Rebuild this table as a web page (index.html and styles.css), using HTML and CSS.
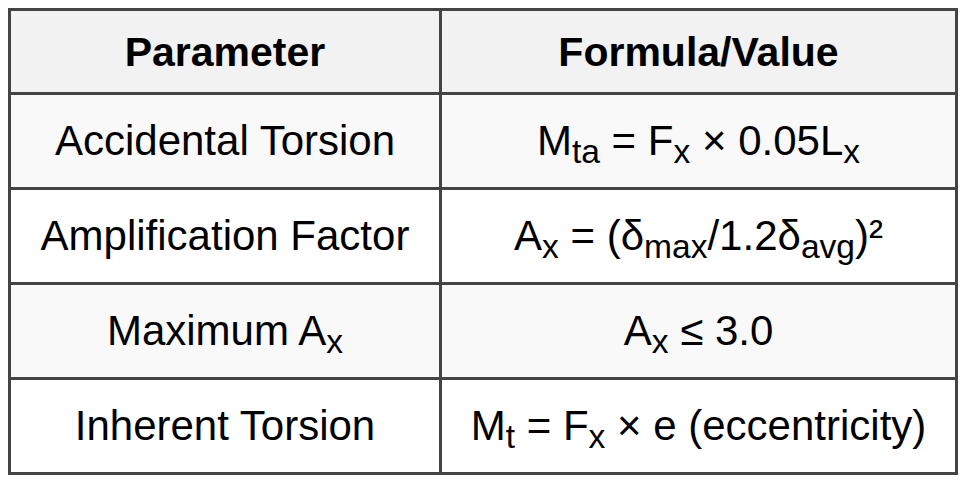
FILE: index.html
```html
<!DOCTYPE html>
<html>
<head>
<meta charset="utf-8">
<link rel="stylesheet" href="styles.css">
</head>
<body>
<table class="params">
  <colgroup>
    <col class="col-name">
    <col class="col-value">
  </colgroup>
  <tr class="head">
    <th>Parameter</th>
    <th>Formula/Value</th>
  </tr>
  <tr class="shade">
    <td>Accidental Torsion</td>
    <td>M<sub>ta</sub> = F<sub>x</sub> × 0.05L<sub>x</sub></td>
  </tr>
  <tr>
    <td>Amplification Factor</td>
    <td>A<sub>x</sub> = (δ<sub>max</sub>/1.2δ<sub>avg</sub>)²</td>
  </tr>
  <tr class="shade">
    <td>Maximum A<sub>x</sub></td>
    <td>A<sub>x</sub> ≤ 3.0</td>
  </tr>
  <tr>
    <td>Inherent Torsion</td>
    <td>M<sub>t</sub> = F<sub>x</sub> × e (eccentricity)</td>
  </tr>
</table>
</body>
</html>
```
FILE: styles.css
```css
html, body {
  margin: 0;
  background: #ffffff;
}
body {
  margin: 8px;
  font-family: "Liberation Sans", Arial, sans-serif;
  color: #000;
}
.params {
  width: 100%;
  border-collapse: collapse;
  table-layout: fixed;
}
.col-name { width: 431px; }
.params th,
.params td {
  border: 3px solid #444444;
  text-align: center;
  vertical-align: middle;
  padding: 0 6px;
  white-space: nowrap;
}
.params th {
  height: 81px;
  font-size: 41px;
  line-height: 46px;
  font-weight: bold;
  background: #f2f2f2;
}
.params td {
  height: 92px;
  font-size: 42px;
  line-height: 48px;
  background: #ffffff;
}
.params tr.shade td {
  background: #f9f9f9;
}
.params sub {
  line-height: 0;
  font-size: 0.8em;
  vertical-align: -0.24em;
}
```
